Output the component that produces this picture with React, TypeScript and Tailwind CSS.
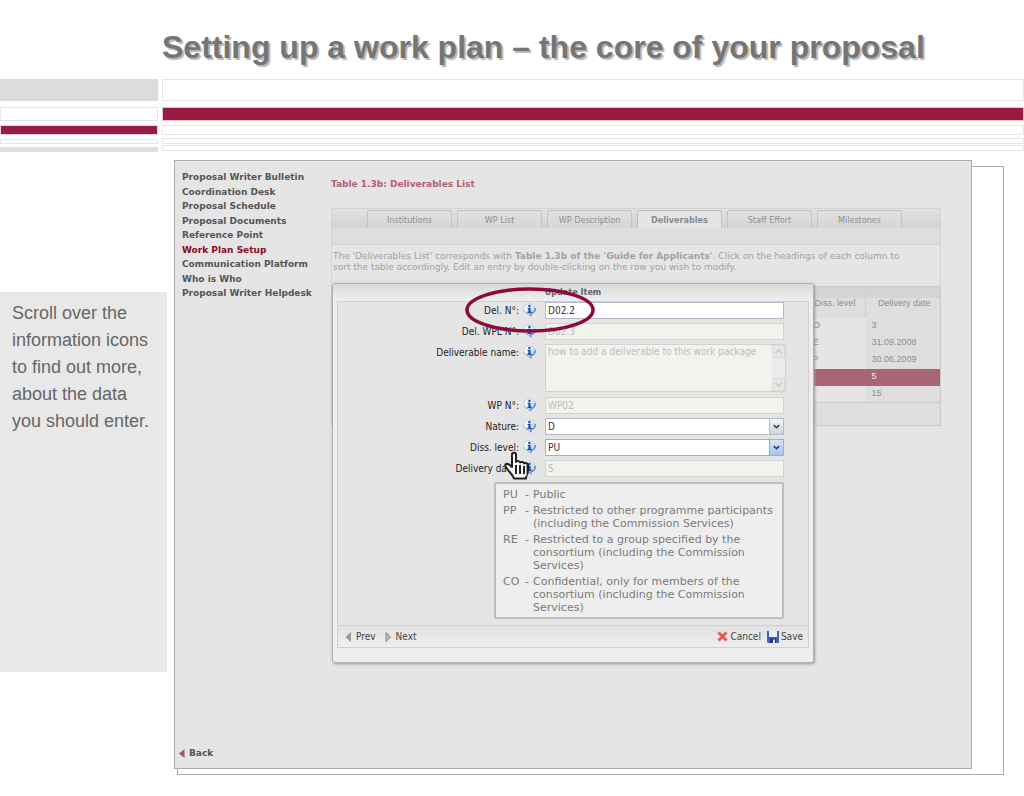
import { useState } from "react";

interface Row {
  level: string;
  date: string;
  selected?: boolean;
}

const menu = [
  "Proposal Writer Bulletin",
  "Coordination Desk",
  "Proposal Schedule",
  "Proposal Documents",
  "Reference Point",
  "Work Plan Setup",
  "Communication Platform",
  "Who is Who",
  "Proposal Writer Helpdesk",
];

const tabs = [
  "Institutions",
  "WP List",
  "WP Description",
  "Deliverables",
  "Staff Effort",
  "Milestones",
];

const rows: Row[] = [
  { level: "CO", date: "3" },
  { level: "RE", date: "31.09.2008" },
  { level: "PP", date: "30.06.2009" },
  { level: "", date: "5", selected: true },
  { level: "", date: "15" },
];

const levels = [
  { code: "PU", desc: "Public" },
  {
    code: "PP",
    desc: "Restricted to other programme participants (including the Commission Services)",
  },
  {
    code: "RE",
    desc: "Restricted to a group specified by the consortium (including the Commission Services)",
  },
  {
    code: "CO",
    desc: "Confidential, only for members of the consortium (including the Commission Services)",
  },
];

const InfoIcon = () => (
  <svg width="13" height="14" viewBox="0 0 13 14" className="shrink-0">
    <defs>
      <linearGradient id="bubble" x1="0" y1="0" x2="1" y2="1">
        <stop offset="0.3" stopColor="#f6faff" />
        <stop offset="1" stopColor="#8db4e4" />
      </linearGradient>
    </defs>
    <path
      d="M6.3.8C3.100.8.7 3 .7 5.900c0 2.600 2 4.600 4.700 5L7.600 13.300v-2.400c2.700-.4 4.700-2.400 4.700-5C12.300 3 9.600.8 6.300.8z"
      fill="url(#bubble)"
      stroke="#a9c3e2"
      strokeWidth="0.7"
    />
    <path d="M12.200 5c.3 3-1.600 5.200-4.300 5.800v2.400" fill="none" stroke="#4a84cc" strokeWidth="1.200" />
    <path d="M1 7.500c.6 1.800 2.200 3 4.400 3.400l1.800 1.800" fill="none" stroke="#7ba6db" strokeWidth="0.800" />
    <circle cx="6.400" cy="2.900" r="1.200" fill="#1b4c9c" />
    <path d="M4.600 4.700h3v4h1V10H4.400V8.700h1V6h-.8z" fill="#1b4c9c" />
  </svg>
);

const HeaderBars = () => (
  <div className="grid grid-cols-[158px_1fr] gap-1">
    <div className="flex flex-col">
      <div className="h-[22px] bg-[#dcdcdc]" />
      <div className="mt-[6px] h-[14px] border border-[#e6e6e6]" />
      <div className="mt-1 h-[10px] border border-[#ead5db] bg-[#9b1a40]" />
      <div className="mt-1 h-[5px] border border-[#e6e6e6]" />
      <div className="mt-[3px] h-[5px] bg-[#dedede]" />
    </div>
    <div className="flex flex-col">
      <div className="h-[22px] border border-[#e3e6e6]" />
      <div className="mt-[6px] h-[14px] border border-[#e0c3cc] bg-[#9b1a40]" />
      <div className="mt-1 h-[10px] border border-[#e6e6e6]" />
      <div className="mt-[3px] h-[6px] border border-[#e6e6e6]" />
      <div className="mt-px h-[6px] border border-[#e6e6e6]" />
    </div>
  </div>
);

const Tabs = () => (
  <div className="border border-[#d3d3d3] bg-[#dedede]">
    <div className="flex h-[19px] gap-[5px] bg-linear-to-b from-[#e2e2e2] to-[#d2d2d2] pt-px pl-[35px]">
      {tabs.map((tab) => (
        <button
          key={tab}
          type="button"
          className={`w-[85px] rounded-t-xs border border-b-0 font-['DejaVu_Sans_Condensed','DejaVu_Sans',sans-serif] text-[9px] leading-4 whitespace-nowrap ${
            tab === "Deliverables"
              ? "border-[#bdbdbd] bg-[#e5e5e5] font-bold text-[#8a8a8a]"
              : "border-[#c4c4c4] bg-linear-to-b from-[#e0e0e0] to-[#d6d6d6] text-[#8f8f8f]"
          }`}
        >
          {tab}
        </button>
      ))}
    </div>
    <div className="h-4" />
  </div>
);

const DeliverablesTable = () => (
  <table className="w-full table-fixed border-collapse border border-[#cbcbcb] text-left font-['Liberation_Sans',Arial,sans-serif] text-[9px] text-[#8f8f8f]">
    <colgroup>
      <col />
      <col className="w-[65px]" />
      <col className="w-[75px]" />
    </colgroup>
    <thead>
      <tr className="h-[31px] bg-linear-to-b from-[#d4d4d4] from-35% to-[#dedede] to-35%">
        <td />
        <th className="pt-[3px] pl-[14px] font-normal whitespace-nowrap">Diss. level</th>
        <th className="border-l border-[#cfcfcf] pt-[3px] pl-3 font-normal whitespace-nowrap">
          Delivery date
        </th>
      </tr>
    </thead>
    <tbody>
      {rows.map(({ level, date, selected }) => (
        <tr key={date} className={`h-[17px] ${selected ? "bg-[#a96577] text-[#eee]" : ""}`}>
          <td />
          <td className="pl-[6px]">{level}</td>
          <td className={`pl-[6px] ${selected ? "" : "bg-[#dedede]"}`}>{date}</td>
        </tr>
      ))}
    </tbody>
    <tfoot>
      <tr className="h-[23px] border-t border-[#cbcbcb] bg-[#dedede]">
        <td colSpan={3} />
      </tr>
    </tfoot>
  </table>
);

interface FieldProps {
  id: string;
  label: string;
  children: React.ReactNode;
}

const Field = ({ id, label, children }: FieldProps) => (
  <div className="flex items-start">
    <label
      htmlFor={id}
      className="w-[181px] shrink-0 text-right text-[10px] leading-[17px] whitespace-nowrap text-[#222]"
    >
      {label}:
    </label>
    <span className="mt-px mr-[9px] ml-1">
      <InfoIcon />
    </span>
    {children}
  </div>
);

const inputStyle =
  "h-[17px] w-[239px] border px-[2px] text-[10px] leading-[15px] outline-none";
const disabledStyle = "border-[#d0d3d6] bg-[#f1f3ed] text-[#bdbdbd]";

interface SelectProps {
  id: string;
  options: string[];
  initial: string;
  active?: boolean;
}

const Select = ({ id, options, initial, active }: SelectProps) => {
  const [value, setValue] = useState(initial);
  return (
    <div className="relative">
      <select
        id={id}
        value={value}
        onChange={(e) => setValue(e.target.value)}
        className={`${inputStyle} block appearance-none bg-white text-[#333] ${
          active ? "border-[#8fb0e0]" : "border-[#b5b8c8]"
        }`}
      >
        {options.map((option) => (
          <option key={option}>{option}</option>
        ))}
      </select>
      <svg
        width="14"
        height="15"
        viewBox="0 0 14 15"
        className={`pointer-events-none absolute top-px right-px border-l ${
          active
            ? "border-[#8fb0e0] bg-linear-to-b from-[#d5e4fa] to-[#a9c6ef]"
            : "border-[#b5b8c8] bg-linear-to-b from-[#f5f5f5] to-[#d0d4da]"
        }`}
      >
        <path d="M4 6l3 2.600L10 6" fill="none" stroke="#2f4468" strokeWidth="1.800" />
      </svg>
    </div>
  );
};

// hint box that explains the dissemination levels
const LevelHint = () => (
  <dl
    role="tooltip"
    className="absolute top-[198px] left-[161px] flex w-[290px] flex-col gap-[3px] rounded-xs border-2 border-[#bdbdbd] bg-[#eee] pt-1 pb-[3px] pl-[7px] font-['DejaVu_Sans',Verdana,sans-serif] text-[11px] leading-[13px] text-[#7a7a7a]"
  >
    {levels.map(({ code, desc }) => (
      <div key={code} className="flex">
        <dt className="w-[22px] shrink-0">{code}</dt>
        <dd className="flex">
          <span className="w-2 shrink-0">-</span>
          <span>{desc}</span>
        </dd>
      </div>
    ))}
  </dl>
);

const HandCursor = () => (
  <svg
    width="28"
    height="30"
    viewBox="0 0 28 30"
    className="pointer-events-none absolute top-[167px] left-[170px]"
  >
    <path
      d="M9 3.500C9 1 13 1 13 3.500V11c1-1.500 4-1 4 .5 1-1 4-.5 4 1 1-1 4-.5 4 1.500v6c0 3-2 4-2 7.500H11c-1-3-4-6-6-8.500s-3.500-4-2.500-5.500c1.500-1.500 4 0 6.500 2.500z"
      fill="#fff"
      stroke="#222"
      strokeWidth="2"
      strokeLinejoin="round"
    />
    <path d="M13 14v9M17 14v9M21 15v8" stroke="#222" strokeWidth="2" />
    <path d="M23.500 13v12" stroke="#999" strokeWidth="1" />
  </svg>
);

const FooterButton = ({ icon, children }: { icon: React.ReactNode; children: string }) => (
  <button type="button" className="flex items-center gap-[2px] text-[10px] leading-[14px] text-[#444]">
    {icon}
    {children}
  </button>
);

const UpdateDialog = () => (
  <section
    role="dialog"
    aria-labelledby="dialog-title"
    className="absolute top-0 left-px w-[482px] rounded-[3px] border border-[#b0b0b0] bg-[#eee] px-1 pb-[14px] font-['DejaVu_Sans_Condensed','DejaVu_Sans',Tahoma,sans-serif] shadow-[1px_1px_3px_#999]"
  >
    <h3
      id="dialog-title"
      className="-mx-1 bg-linear-to-b from-[#dadada] to-[#efefef] text-center text-[9px] leading-[17px] font-bold text-[#666]"
    >
      Update Item
    </h3>
    <div className="border border-[#d0d0d0]">
      <form className="flex min-h-[323px] flex-col gap-1 bg-[#e5e5e5]">
        <Field id="del-no" label="Del. N°">
          <input
            id="del-no"
            type="text"
            defaultValue="D02.2"
            className={`${inputStyle} border-[#b5b8c8] bg-white text-[#333]`}
          />
        </Field>
        <Field id="wpl-no" label="Del. WPL N°">
          <input
            id="wpl-no"
            type="text"
            defaultValue="D02.3"
            disabled
            className={`${inputStyle} ${disabledStyle}`}
          />
        </Field>
        <Field id="del-name" label="Deliverable name">
          <div className="relative">
            <textarea
              id="del-name"
              disabled
              defaultValue="how to add a deliverable to this work package"
              className={`block h-12 w-[241px] resize-none overflow-hidden border py-0 pr-4 pl-[2px] text-[10px] leading-[14px] ${disabledStyle}`}
            />
            <svg
              width="13"
              height="46"
              viewBox="0 0 13 46"
              className="absolute top-px right-px bg-[#ebebeb]"
            >
              <rect x="0.5" y="0.500" width="12" height="12" fill="#e6e6e2" stroke="#dadad8" />
              <rect x="0.500" y="33.500" width="12" height="12" fill="#e6e6e2" stroke="#dadad8" />
              <path d="M3.500 8l3-3 3 3M3.500 38l3 3 3-3" fill="none" stroke="#c8c8c8" strokeWidth="1.500" />
            </svg>
          </div>
        </Field>
        <div className="mt-px flex flex-col gap-1">
          <Field id="wp-no" label="WP N°">
            <input
              id="wp-no"
              type="text"
              defaultValue="WP02"
              disabled
              className={`${inputStyle} ${disabledStyle}`}
            />
          </Field>
          <Field id="nature" label="Nature">
            <Select id="nature" options={["R", "P", "D", "O"]} initial="D" />
          </Field>
          <Field id="level" label="Diss. level">
            <Select id="level" options={["PU", "PP", "RE", "CO"]} initial="PU" active />
          </Field>
          <Field id="date" label="Delivery date">
            <input
              id="date"
              type="text"
              defaultValue="5"
              disabled
              className={`${inputStyle} ${disabledStyle}`}
            />
          </Field>
        </div>
      </form>
      <div className="flex h-[22px] items-center border-t border-[#cfcfcf] bg-linear-to-b from-[#e2e2e2] to-[#eee] px-[5px]">
        <div className="flex gap-2">
          <FooterButton
            icon={
              <svg width="11" height="10" viewBox="0 0 11 10">
                <path d="M7.500.5v9L3 5z" fill="#999" stroke="#777" strokeWidth="0.500" />
              </svg>
            }
          >
            Prev
          </FooterButton>
          <FooterButton
            icon={
              <svg width="10" height="10" viewBox="0 0 10 10">
                <path d="M2 .5v9L6.500 5z" fill="#bbb" stroke="#777" strokeWidth="0.800" />
              </svg>
            }
          >
            Next
          </FooterButton>
        </div>
        <div className="ml-auto flex gap-[6px]">
          <FooterButton
            icon={
              <svg width="11" height="11" viewBox="0 0 11 11">
                <path d="M1.500 1.500l8 8M9.500 1.500l-8 8" stroke="#ea5a54" strokeWidth="3" />
              </svg>
            }
          >
            Cancel
          </FooterButton>
          <FooterButton
            icon={
              <svg width="12" height="12" viewBox="0 0 12 12">
                <path d="M0 0h12v12H1L0 11z" fill="#4562b4" />
                <path d="M2 0h8v6H2z" fill="#e9effa" />
                <path d="M3 7.500h6V12H3z" fill="#22356f" />
                <path d="M6 8.500h2V12H6z" fill="#dfe6f4" />
              </svg>
            }
          >
            Save
          </FooterButton>
        </div>
      </div>
    </div>
    <LevelHint />
    <HandCursor />
    <svg
      width="132"
      height="50"
      viewBox="0 0 132 50"
      className="pointer-events-none absolute top-px left-[131px]"
    >
      <ellipse cx="66" cy="25" rx="63" ry="21" fill="none" stroke="#8c0b3c" strokeWidth="3.500" />
    </svg>
  </section>
);

export default function App() {
  return (
    <div className="bg-white font-['DejaVu_Sans',Verdana,sans-serif]">
      <h1 className="pt-[27px] pb-3 pl-[162px] font-['Liberation_Sans',Arial,sans-serif] text-[32px] leading-10 font-bold whitespace-nowrap text-[#757575] [text-shadow:2px_2px_1px_#b5b5b5]">
        Setting up a work plan – the core of your proposal
      </h1>
      <HeaderBars />
      <div className="mt-[14px] flex items-start">
        <aside className="mt-[126px] min-h-[380px] w-[167px] shrink-0 bg-[#e8e8e8] pt-2 pl-3">
          <p className="font-['Liberation_Sans_Narrow','Arial_Narrow','Liberation_Sans',sans-serif] text-[18px] leading-[27px] whitespace-nowrap text-[#666]">
            Scroll over the
            <br />
            information icons
            <br />
            to find out more,
            <br />
            about the data
            <br />
            you should enter.
          </p>
        </aside>
        <div className="mr-5 ml-[10px] flex-1 border border-[#ababab]">
          <main className="-mt-[7px] mr-[31px] mb-[5px] -ml-1 flex min-h-[609px] border border-[#ababab] bg-[#e5e5e5] pr-[30px]">
            <nav className="flex w-[156px] shrink-0 flex-col pt-[9px] pb-2 pl-[7px] text-[9px] font-bold text-[#555]">
              <ul className="grid h-[131px] auto-rows-fr">
                {menu.map((item) => (
                  <li key={item}>
                    <a
                      href="#"
                      className={`leading-[14px] whitespace-nowrap ${
                        item === "Work Plan Setup" ? "text-[#8c0b1f]" : ""
                      }`}
                    >
                      {item}
                    </a>
                  </li>
                ))}
              </ul>
              <a href="#" className="mt-auto -ml-[3px] flex items-center gap-1 leading-[14px]">
                <svg width="6" height="9" viewBox="0 0 6 9">
                  <path d="M5.500 0v9L0 4.500z" fill="#a0566c" />
                </svg>
                Back
              </a>
            </nav>
            <div className="min-w-0 flex-1">
              <h2 className="mt-4 mb-[17px] text-[9px] leading-[14px] font-bold text-[#b0607a]">
                Table 1.3b: Deliverables List
              </h2>
              <Tabs />
              <div className="relative">
                <div className="absolute top-[38px] left-0">
                  <UpdateDialog />
                </div>
                <p className="min-h-[41px] border-x border-[#d3d3d3] pt-[6px] pl-px text-[9px] leading-[11px] text-[#a2a2a2]">
                  The 'Deliverables List' corresponds with{" "}
                  <b>Table 1.3b of the 'Guide for Applicants'</b>. Click on the headings of each
                  column to
                  <br />
                  sort the table accordingly. Edit an entry by double-clicking on the row you wish
                  to modify.
                </p>
                <DeliverablesTable />
              </div>
            </div>
          </main>
        </div>
      </div>
    </div>
  );
}
